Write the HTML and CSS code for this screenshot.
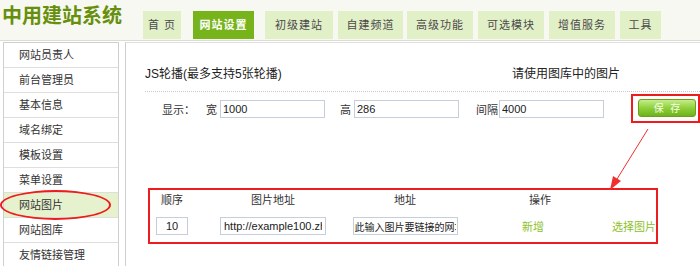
FILE: index.html
```html
<!DOCTYPE html>
<html lang="zh-CN">
<head>
  <meta charset="UTF-8">
  <title>中用建站系统 - 网站图片</title>
  <link rel="stylesheet" href="styles.css">
</head>
<body>
  <div class="header">
    <div class="logo">中用建站系统</div>
    <div class="tabs">
      <a class="tab tab-home">首 页</a>
      <a class="tab tab-active">网站设置</a>
      <a class="tab tab-third">初级建站</a>
      <a class="tab tab-fourth">自建频道</a>
      <a class="tab">高级功能</a>
      <a class="tab">可选模块</a>
      <a class="tab">增值服务</a>
      <a class="tab tab-tools">工具</a>
    </div>
  </div>

  <div class="page">
    <div class="sidebar">
      <div class="side-item">网站员责人</div>
      <div class="side-item">前台管理员</div>
      <div class="side-item">基本信息</div>
      <div class="side-item">域名绑定</div>
      <div class="side-item">模板设置</div>
      <div class="side-item">菜单设置</div>
      <div class="side-item side-current">网站图片</div>
      <div class="side-item">网站图库</div>
      <div class="side-item">友情链接管理</div>
      <!-- red circle drawn over the current menu item -->
      <div class="mark-ellipse"></div>
    </div>

    <div class="main">
      <div class="title-row">
        <span class="title">JS轮播(最多支持5张轮播)</span>
        <span class="hint">请使用图库中的图片</span>
      </div>
      <div class="dots"></div>

      <div class="form-row">
        <span class="lbl lbl-show">显示：</span>
        <span class="lbl lbl-w">宽</span>
        <input class="txt" type="text" value="1000">
        <span class="lbl lbl-h">高</span>
        <input class="txt" type="text" value="286">
        <span class="lbl lbl-gap">间隔</span>
        <input class="txt" type="text" value="4000">
        <div class="save-box">
          <button class="save-btn">保&nbsp;&nbsp;&nbsp;存</button>
        </div>
      </div>

      <div class="pic-table">
        <div class="th">顺序</div>
        <div class="th">图片地址</div>
        <div class="th">地址</div>
        <div class="th th-op">操作</div>
        <div class="th"></div>

        <div class="td"><input class="txt txt-order" type="text" value="10"></div>
        <div class="td"><input class="txt txt-pic" type="text" value="http://example100.zhan"></div>
        <div class="td"><input class="txt txt-link" type="text" value="此输入图片要链接的网址"></div>
        <div class="td td-add"><a class="op-link">新增</a></div>
        <div class="td td-pick"><a class="op-link">选择图片</a></div>
      </div>

      <!-- arrow from the save button down to the table -->
      <svg class="mark-arrow" width="60" height="70" viewBox="0 0 60 70">
        <line x1="52" y1="2" x2="21" y2="52" stroke="#f03030" stroke-width="1"/>
        <polygon points="14,63 17,49 25,54" fill="#f03030"/>
      </svg>
    </div>
  </div>
</body>
</html>
```

FILE: styles.css
```css
body {
  margin: 0;
  background: #fff;
  font-family: "Liberation Sans", "Noto Sans CJK SC", sans-serif;
  font-size: 11px;
  color: #333;
  height: 266px;
  overflow: hidden;
}
.header {
  display: flex;
  align-items: flex-start;
  height: 40px;
  background: #f7f8f2;
  border-bottom: 1px solid #dcdcd4;
}
.logo {
  font-family: "Noto Sans CJK SC", sans-serif;
  font-size: 20px;
  font-weight: bold;
  color: #668f0c;
  line-height: 26px;
  padding: 2px 0 0 2px;
}
.tabs {
  display: flex;
  margin: 11px 0 0 21px;
}
.tab {
  display: block;
  width: 66px;
  height: 28px;
  line-height: 28px;
  margin-right: 5px;
  text-align: center;
  background: #e2f0c8;
  color: #4a4a4a;
  letter-spacing: 1px;
  font-size: 11px;
}
.tab-home {
  width: 38px;
  margin-right: 12px;
}
.tab-active {
  width: 61px;
  margin-right: 11px;
  background: #77b41b;
  color: #fff;
  font-weight: bold;
}
.tab-third {
  width: 68px;
}
.tab-fourth {
  width: 65px;
  margin-right: 4px;
}
.tab-tools {
  width: 41px;
}
.page {
  display: flex;
  padding-top: 1px;
}
.sidebar {
  position: relative;
  width: 114px;
  margin-left: 3px;
  border: 1px solid #cfcfcf;
  border-bottom: none;
}
.side-item {
  height: 24px;
  line-height: 24px;
  padding-left: 15px;
  border-bottom: 1px solid #dedede;
  font-size: 11px;
  color: #333;
}
.side-current {
  background: #e6f2cd;
}
.mark-ellipse {
  position: absolute;
  left: -4px;
  top: 147px;
  width: 107px;
  height: 26px;
  border: 2px solid #ee1c1c;
  border-radius: 50%;
}
.main {
  position: relative;
  flex: 1;
  margin-left: 6px;
  border-left: 1px solid #cfcfcf;
  border-top: 1px solid #dedede;
  padding-left: 19px;
}
.title-row {
  display: flex;
  padding-top: 23px;
  line-height: 16px;
  font-size: 12px;
  color: #222;
}
.title {
  width: 367px;
}
.dots {
  margin-top: 9px;
  border-top: 1px dotted #c8c8c8;
}
.form-row {
  display: flex;
  align-items: center;
  margin-top: 2px;
}
.lbl {
  color: #333;
  font-size: 11px;
}
.lbl-show {
  margin-left: 17px;
  width: 44px;
}
.lbl-w,
.lbl-h {
  margin-right: 3px;
}
.lbl-h {
  margin-left: 15px;
}
.lbl-gap {
  margin-left: 17px;
  margin-right: 1px;
}
.txt {
  box-sizing: border-box;
  width: 105px;
  height: 18px;
  border: 1px solid #c5cfdb;
  padding: 0 2px;
  font-family: "Liberation Sans", "Noto Sans CJK SC", sans-serif;
  font-size: 11px;
  color: #222;
  background: #fff;
}
.save-box {
  margin-left: 27px;
  padding: 3px 2px 4px 5px;
  border: 2px solid #ee1c1c;
}
.save-btn {
  display: block;
  width: 58px;
  height: 18px;
  border: 1px solid #6aa118;
  border-radius: 3px;
  background: linear-gradient(#c6ec8c, #8fd03a 50%, #6db21c);
  color: #f4ffe6;
  font-family: "Noto Sans CJK SC", sans-serif;
  font-size: 10px;
  padding: 0;
  line-height: 16px;
}
.pic-table {
  display: grid;
  grid-template-columns: 44px 158px 106px 164px 34px;
  grid-template-rows: 20px 32px;
  width: 506px;
  height: 52px;
  margin: 65px 0 0 3px;
  border: 2px solid #ee1c1c;
}
.th {
  text-align: center;
  line-height: 18px;
  font-size: 11px;
  color: #333;
  padding-top: 1px;
}
.td {
  display: flex;
  align-items: center;
  justify-content: center;
}
.txt-order {
  width: 32px;
  text-align: center;
}
.txt-pic {
  width: 106px;
  padding: 0 3px;
}
.txt-link {
  width: 105px;
  padding: 0 1px;
  font-family: "Noto Sans CJK SC", sans-serif;
  font-size: 10px;
}
.td-add {
  padding-right: 14px;
}
.td-pick {
  justify-content: flex-end;
}
.op-link {
  color: #8dbf2a;
  font-size: 11px;
  white-space: nowrap;
}
.mark-arrow {
  position: absolute;
  left: 470px;
  top: 84px;
}
```
